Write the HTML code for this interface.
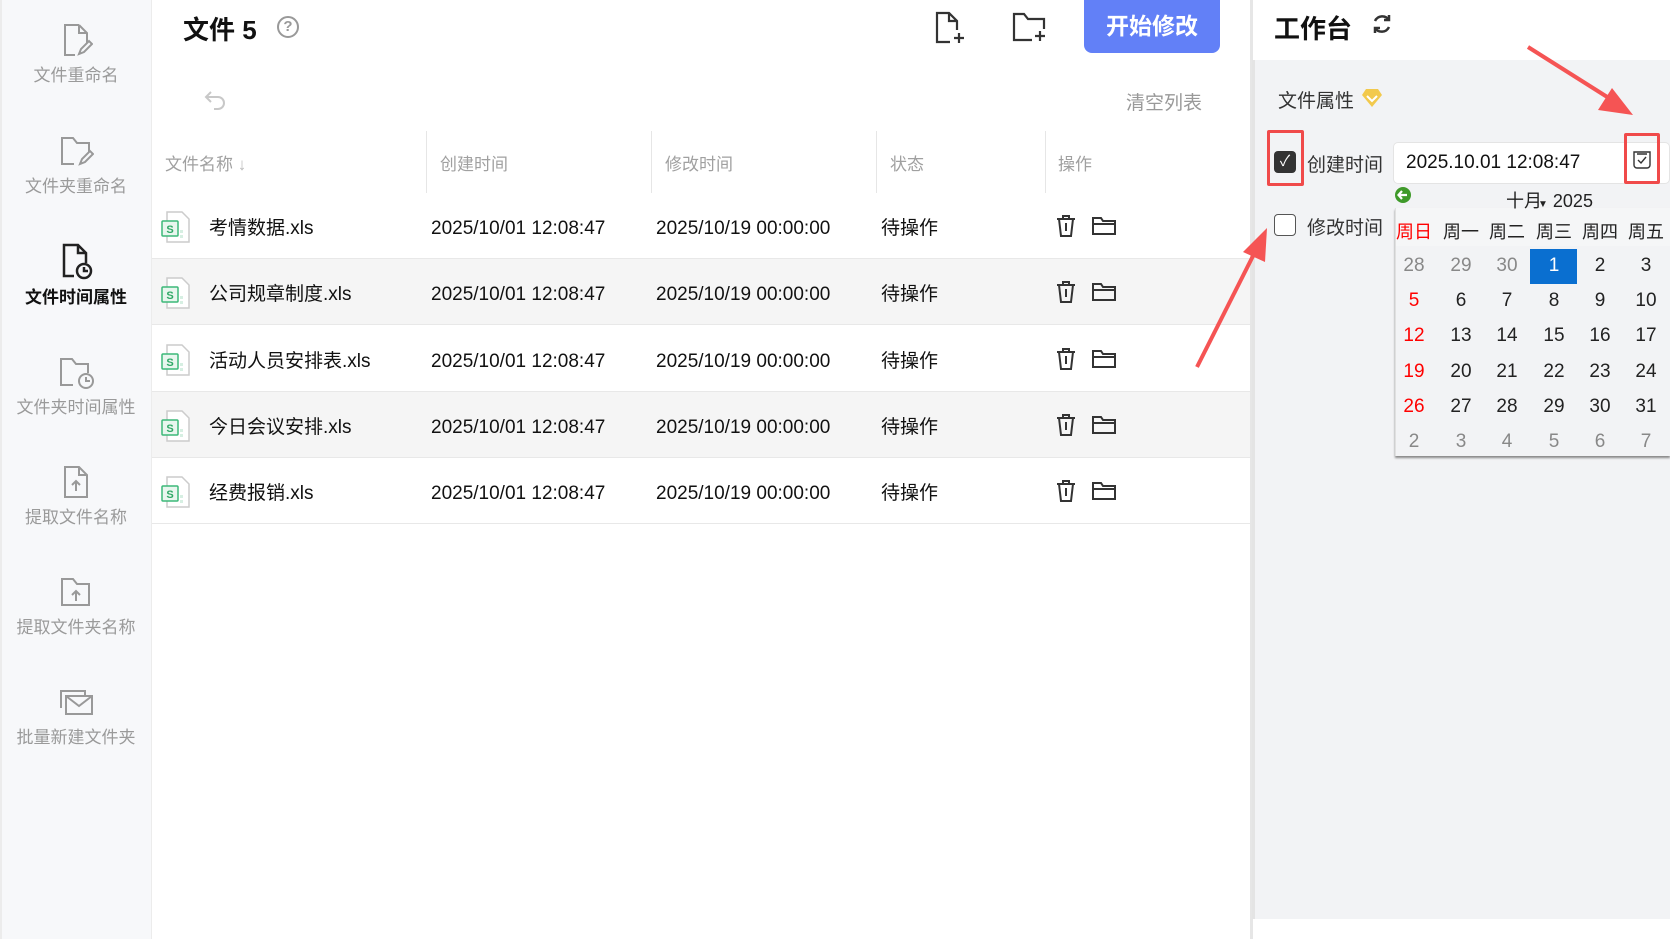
<!DOCTYPE html>
<html><head><meta charset="utf-8"><style>
*{margin:0;padding:0;box-sizing:border-box}
body{width:1670px;height:939px;position:relative;overflow:hidden;background:#fff;font-family:"Liberation Sans","Noto Sans CJK SC",sans-serif;color:#222}
.a{position:absolute}
.sb{left:0;top:0;width:152px;height:939px;background:#f7f8fa;border-right:1px solid #ececec;border-left:2px solid #ececec}
.si{position:absolute;left:0;width:152px;text-align:center;font-size:17px;color:#9a9a9a}
.si svg{display:block;margin:0 auto 3px}
.hd{font-size:17px;color:#a0a0a0;top:150px}
.vs{width:1px;height:62px;top:131px;background:#e6e6e6}
.row{left:152px;width:1098px;height:66px;border-bottom:1px solid #e8e8e8}
.row.g{background:#f5f5f5}
.c{position:absolute;top:3px;line-height:66px;font-size:19px;color:#111}
.rp{left:1252px;top:60px;width:418px;height:859px;background:#f2f3f5;border-left:3px solid #e4e4e4}
.wk{font-size:18px;color:#222;width:46px;text-align:center}
.d{font-size:19px;color:#222;width:46px;text-align:center}
.r{color:#f00}.m{color:#888}
</style></head><body>
<div class="a sb"></div>
<div class="si" style="top:22px"><svg width="34" height="36" viewBox="0 0 34 36" fill="none" stroke="#999" stroke-width="2"><path d="M20 3H6v30h10M20 3l8 8v10M20 3v8h8"/><path d="M20 32l2-5 8-8 3 3-8 8z"/></svg>文件重命名</div>
<div class="si" style="top:133px"><svg width="36" height="36" viewBox="0 0 36 36" fill="none" stroke="#999" stroke-width="2"><path d="M16 31H4V5h11l4 5h12v9"/><path d="M22 31l2-5 8-8 3 3-8 8z"/></svg>文件夹重命名</div>
<div class="si" style="top:242px;color:#111;font-weight:bold"><svg width="36" height="38" viewBox="0 0 36 38" fill="none" stroke="#222" stroke-width="2.5"><path d="M16 34H6V3h14l8 8v10M20 3v8h8"/><circle cx="26" cy="29" r="7"/><path d="M26 25v4h4"/></svg>文件时间属性</div>
<div class="si" style="top:354px"><svg width="38" height="36" viewBox="0 0 38 36" fill="none" stroke="#999" stroke-width="2"><path d="M16 31H4V5h11l4 5h12v9"/><circle cx="29" cy="27" r="7"/><path d="M29 23v4h4"/></svg>文件夹时间属性</div>
<div class="si" style="top:464px"><svg width="34" height="36" viewBox="0 0 34 36" fill="none" stroke="#999" stroke-width="2"><path d="M20 3H6v30h22V11zM20 3v8h8"/><path d="M17 27v-10M13 21l4-4 4 4"/></svg>提取文件名称</div>
<div class="si" style="top:574px"><svg width="36" height="36" viewBox="0 0 36 36" fill="none" stroke="#999" stroke-width="2"><path d="M4 5h11l4 5h12v21H4z"/><path d="M18 27v-10M14 21l4-4 4 4"/></svg>提取文件夹名称</div>
<div class="si" style="top:684px"><svg width="38" height="36" viewBox="0 0 38 36" fill="none" stroke="#999" stroke-width="2"><path d="M4 24V7h24v4"/><path d="M9 12h26v18H9z"/><path d="M9 12l13 10 13-10"/></svg>批量新建文件夹</div>

<div class="a" style="left:183px;top:10px;font-size:26px;font-weight:bold;color:#111">文件&nbsp;5</div>
<div class="a" style="left:277px;top:16px;width:22px;height:22px;border:2px solid #999;border-radius:50%;color:#999;font-size:15px;text-align:center;line-height:18px;font-weight:bold">?</div>
<svg class="a" style="left:932px;top:10px" width="36" height="36" viewBox="0 0 36 36" fill="none" stroke="#333" stroke-width="2.2"><path d="M18 32H5V3h12l8 8v9M17 3v8h8M27 23v10M22 28h10"/></svg>
<svg class="a" style="left:1010px;top:10px" width="40" height="36" viewBox="0 0 40 36" fill="none" stroke="#333" stroke-width="2.2"><path d="M22 30H4V4h10l4 5h16v10M30 21v10M25 26h10"/></svg>
<div class="a" style="left:1084px;top:0;width:136px;height:53px;background:#6280f7;border-radius:0 0 8px 8px;color:#fff;font-size:23px;font-weight:bold;text-align:center;line-height:53px">开始修改</div>
<svg class="a" style="left:203px;top:88px" width="26" height="24" viewBox="0 0 26 24" fill="none" stroke="#c8c8c8" stroke-width="2"><path d="M8 4L3 9l5 5M3 9h12a6 6 0 010 12h-4"/></svg>
<div class="a" style="left:1126px;top:88px;font-size:19px;color:#999">清空列表</div>

<div class="a hd" style="left:165px">文件名称 <span style="color:#bbb">↓</span></div>
<div class="a hd" style="left:440px">创建时间</div>
<div class="a hd" style="left:665px">修改时间</div>
<div class="a hd" style="left:890px">状态</div>
<div class="a hd" style="left:1058px">操作</div>
<div class="a vs" style="left:426px"></div><div class="a vs" style="left:651px"></div><div class="a vs" style="left:876px"></div><div class="a vs" style="left:1045px"></div>

<div id="rows"></div>
<script>
var n=["考情数据.xls","公司规章制度.xls","活动人员安排表.xls","今日会议安排.xls","经费报销.xls"],h="";
for(var i=0;i<5;i++){var t=193+i*66.3;
h+='<div class="a row'+(i%2?' g':'')+'" style="top:'+t+'px">'+
'<svg style="position:absolute;left:9px;top:18px" width="30" height="32" viewBox="0 0 30 32"><path d="M6 1h15l7 7v23H6z" fill="#fff" stroke="#ccc" stroke-width="1.5"/><rect x="19" y="19" width="3" height="3" fill="#d6efe2"/><rect x="19" y="24" width="3" height="3" fill="#d6efe2"/><rect x="1" y="10" width="16" height="15" rx="1" fill="#e8f6ee" stroke="#3cb878" stroke-width="1.5"/><text x="9" y="22" font-size="11" font-weight="bold" text-anchor="middle" fill="#2fa866" font-family="Liberation Sans">S</text></svg>'+
'<div class="c" style="left:57px">'+n[i]+'</div><div class="c" style="left:279px">2025/10/01 12:08:47</div><div class="c" style="left:504px">2025/10/19 00:00:00</div><div class="c" style="left:729px">待操作</div>'+
'<svg style="position:absolute;left:902px;top:21px" width="24" height="24" viewBox="0 0 24 24" fill="none" stroke="#333" stroke-width="2"><path d="M3 5h18M9 5V2h6v3M5 5l2 17h10l2-17M12 9v8"/></svg>'+
'<svg style="position:absolute;left:939px;top:21px" width="26" height="24" viewBox="0 0 26 24" fill="none" stroke="#333" stroke-width="2"><path d="M2 20V4h8l2 3h12v13zM2 10h22"/></svg></div>';}
document.getElementById('rows').innerHTML=h;
</script>

<div class="a" style="left:1250px;top:0;width:3px;height:939px;background:#e6e6e6"></div>
<div class="a rp"></div>
<div class="a" style="left:1274px;top:9px;font-size:26px;font-weight:bold;color:#111">工作台</div>
<svg class="a" style="left:1370px;top:12px" width="24" height="24" viewBox="0 0 24 24" fill="none" stroke="#333" stroke-width="2.5"><path d="M19 8a8 8 0 00-14 1M5 16a8 8 0 0014-1"/><path d="M19 3v5h-5M5 21v-5h5"/></svg>
<div class="a" style="left:1278px;top:86px;font-size:19px;color:#333">文件属性</div>
<svg class="a" style="left:1361px;top:88px" width="22" height="20" viewBox="0 0 22 20"><path d="M5 1h12l4 6-10 12L1 7z" fill="#f2c94c"/><path d="M6 8l5 5 5-5" stroke="#fff" stroke-width="2" fill="none"/></svg>

<div class="a" style="left:1267px;top:130px;width:37px;height:56px;border:3px solid #f04a4a;border-radius:2px"></div>
<div class="a" style="left:1274px;top:151px;width:22px;height:22px;background:#333;border-radius:4px;color:#fff;font-size:15px;text-align:center;line-height:22px">✓</div>
<div class="a" style="left:1307px;top:150px;font-size:19px;color:#333">创建时间</div>
<div class="a" style="left:1274px;top:214px;width:22px;height:22px;border:1.5px solid #555;border-radius:4px;background:#fff"></div>
<div class="a" style="left:1307px;top:213px;font-size:19px;color:#333">修改时间</div>

<div class="a" style="left:1393px;top:142px;width:277px;height:42px;background:#fff;border:1px solid #e4e4e4;border-radius:5px"></div>
<div class="a" style="left:1406px;top:152px;font-size:19px;color:#111">2025.10.01 12:08:47</div>
<div class="a" style="left:1624px;top:133px;width:36px;height:51px;border:3px solid #f04a4a;border-radius:2px"></div>
<svg class="a" style="left:1632px;top:150px" width="20" height="20" viewBox="0 0 20 20" fill="none" stroke="#333" stroke-width="1.4"><path d="M2 2h16v13a3 3 0 01-3 3H5a3 3 0 01-3-3zM5 4h10M6 10l3 3 5-6"/></svg>

<div class="a" style="left:1395px;top:208px;width:275px;height:248px;background:#f2f3f5;border-left:1px solid #e0e0e0;box-shadow:0 2px 2px #888"></div>
<div class="a" style="left:1396px;top:208px;width:274px;height:38px;background:#f5f6f7"></div>
<svg class="a" style="left:1394px;top:186px" width="18" height="18" viewBox="0 0 18 18"><circle cx="9" cy="9" r="8" fill="#3f9a2a"/><path d="M13 9H5M8 5L4.5 9 8 13" stroke="#fff" stroke-width="2.2" fill="none"/></svg>
<div class="a" style="left:1506px;top:187px;font-size:18px;color:#222">十月<span style="font-size:10px;margin-left:-4px">▼</span> 2025</div>
<div id="cal"></div>
<script>
var w=["周日","周一","周二","周三","周四","周五"],x=[1391,1438,1484,1531,1577,1623],c="";
for(var j=0;j<6;j++)c+='<div class="a wk'+(j==0?' r':'')+'" style="left:'+x[j]+'px;top:218px">'+w[j]+'</div>';
var d=[[28,29,30,1,2,3],[5,6,7,8,9,10],[12,13,14,15,16,17],[19,20,21,22,23,24],[26,27,28,29,30,31],[2,3,4,5,6,7]];
for(var r=0;r<6;r++)for(var j=0;j<6;j++){var cls='d';if(r==0&&j<3||r==5)cls+=' m';else if(j==0)cls+=' r';
var y=255+r*35.2;
if(r==0&&j==3)c+='<div class="a" style="left:1530px;top:249px;width:47px;height:35px;background:#0a6fd0"></div>';
c+='<div class="a '+cls+'" style="left:'+x[j]+'px;top:'+y+'px;'+(r==0&&j==3?'color:#fff':'')+'">'+d[r][j]+'</div>';}
document.getElementById('cal').innerHTML=c;
</script>

<svg class="a" style="left:0;top:0" width="1670" height="939" viewBox="0 0 1670 939">
<path d="M1528 47L1612 100" stroke="#f55454" stroke-width="4"/><path d="M1633 115L1598 110 1612 88z" fill="#f55454"/>
<path d="M1197 367L1256 250" stroke="#f55454" stroke-width="4"/><path d="M1267 228L1265 262 1243 252z" fill="#f55454"/>
</svg>
</body></html>
